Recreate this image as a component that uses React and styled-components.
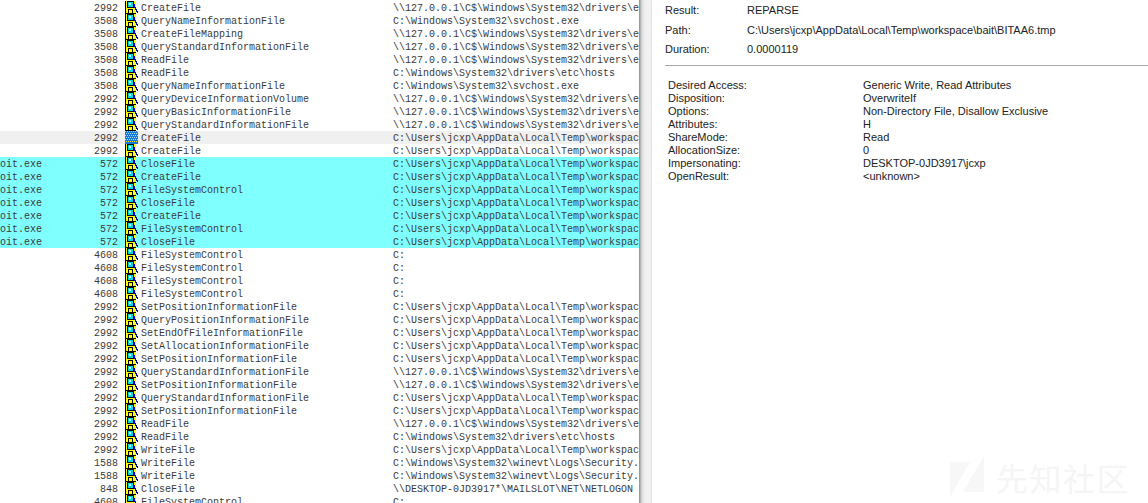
import React from 'react';
import styled, { createGlobalStyle } from 'styled-components';

const GlobalStyle = createGlobalStyle`
  html, body {
    margin: 0;
    padding: 0;
    background: #fff;
    overflow: hidden;
  }
`;

const Page = styled.div`
  position: relative;
  display: flex;
  width: 1148px;
  height: 503px;
  overflow: hidden;
  background: #fff;
`;

const EventList = styled.div`
  flex: none;
  width: 639px;
  height: 503px;
  padding-top: 1px;
  box-sizing: border-box;
  overflow: hidden;
  font-family: "Liberation Mono", monospace;
  font-size: 10px;
  color: #3a3a3a;
`;

const rowBackground = { cyan: '#80ffff', selected: '#f0f0f0' };

const Row = styled.div`
  display: flex;
  align-items: flex-start;
  height: 13px;
  line-height: 15px;
  white-space: nowrap;
  background: ${(p) => rowBackground[p.$tone] || 'transparent'};
`;

const ProcessCell = styled.span`
  flex: none;
  width: 90px;
  overflow: hidden;
`;

const PidCell = styled.span`
  flex: none;
  width: 28px;
  text-align: right;
`;

const IconCell = styled.span`
  flex: none;
  display: flex;
  width: 13px;
  height: 13px;
  margin: 0 3px 0 7px;
`;

const OperationCell = styled.span`
  flex: none;
  width: 252px;
`;

const PathCell = styled.span`
  flex: none;
  width: 246px;
  overflow: hidden;
`;

const Splitter = styled.div`
  flex: none;
  width: 13px;
  height: 503px;
  box-sizing: border-box;
  background: linear-gradient(90deg, #8c8c8c 0, #dedede 3px, #f0f0f0 6px, #f2f2f2 100%);
  border-right: 1px solid #e2e2e2;
`;

const Details = styled.div`
  flex: 1;
  display: flex;
  flex-direction: column;
  padding-left: 13px;
  font-family: "Liberation Sans", Arial, sans-serif;
  font-size: 11px;
  color: #222;
`;

const SummaryRow = styled.div`
  display: grid;
  grid-template-columns: 82px 1fr;
  height: ${(p) => p.$height}px;
  align-items: center;
`;

const Rule = styled.div`
  height: 1px;
  margin-top: 7px;
  background: #a8a8a8;
`;

const PropertyList = styled.div`
  display: grid;
  grid-template-columns: 195px 1fr;
  grid-auto-rows: 13px;
  line-height: 13px;
  align-items: center;
  margin: 13px 0 0 3px;
`;

const Watermark = styled.div`
  position: absolute;
  right: 18px;
  bottom: 5px;
  display: flex;
  align-items: center;
  gap: 10px;
  font-family: "Noto Sans CJK SC", sans-serif;
  font-size: 32px;
  line-height: 40px;
  letter-spacing: 1.5px;
  color: #f5f5f5;
`;

const FileIcon = ({ pending }) => (
  <svg width="13" height="13" viewBox="0 0 13 13" shapeRendering="crispEdges">
    <rect x="0" y="0" width="11" height="13" fill="#ffff00" />
    <rect x="2" y="0" width="7" height="7" fill="#000" />
    <rect x="3" y="1" width="5" height="5" fill="#00d8e8" />
    <rect x="4" y="2" width="2" height="2" fill="#c8ffff" />
    <rect x="0" y="0" width="1" height="13" fill="#000" />
    <rect x="0" y="12" width="11" height="1" fill="#000" />
    <rect x="3" y="8" width="5" height="1" fill="#000" />
    <rect x="3" y="9" width="1" height="3" fill="#000" />
    <rect x="7" y="9" width="1" height="3" fill="#000" />
    <path d="M9 3h1v3h1v2h1v2h1v2h-1v-1h-1v-2h-1v-2h-1z" fill="#0000c0" />
    {pending && (
      <g>
        <rect x="0" y="0" width="13" height="13" fill="#1878d8" />
        {Array.from({ length: 42 }, (_, i) => (
          <rect
            key={i}
            x={(i % 7) * 2 + (Math.floor(i / 7) % 2)}
            y={Math.floor(i / 7) * 2}
            width="1"
            height="1"
            fill={i > 27 ? '#ffe800' : '#a8e0f0'}
          />
        ))}
      </g>
    )}
  </svg>
);

const PIPE = '\\\\127.0.0.1\\C$\\Windows\\System32\\drivers\\etc\\hosts';
const SVCHOST = 'C:\\Windows\\System32\\svchost.exe';
const HOSTS = 'C:\\Windows\\System32\\drivers\\etc\\hosts';
const TEMP = 'C:\\Users\\jcxp\\AppData\\Local\\Temp\\workspace\\bait\\BITAA6.tmp';
const SECURITY = 'C:\\Windows\\System32\\winevt\\Logs\\Security.evtx';
const MAILSLOT = '\\\\DESKTOP-0JD3917*\\MAILSLOT\\NET\\NETLOGON';

const rows = [
  ['', 2992, 'CreateFile', PIPE],
  ['', 3508, 'QueryNameInformationFile', SVCHOST],
  ['', 3508, 'CreateFileMapping', PIPE],
  ['', 3508, 'QueryStandardInformationFile', PIPE],
  ['', 3508, 'ReadFile', PIPE],
  ['', 3508, 'ReadFile', HOSTS],
  ['', 3508, 'QueryNameInformationFile', SVCHOST],
  ['', 2992, 'QueryDeviceInformationVolume', PIPE],
  ['', 2992, 'QueryBasicInformationFile', PIPE],
  ['', 2992, 'QueryStandardInformationFile', PIPE],
  ['', 2992, 'CreateFile', TEMP, 'selected'],
  ['', 2992, 'CreateFile', TEMP],
  ['oit.exe', 572, 'CloseFile', TEMP, 'cyan'],
  ['oit.exe', 572, 'CreateFile', TEMP, 'cyan'],
  ['oit.exe', 572, 'FileSystemControl', TEMP, 'cyan'],
  ['oit.exe', 572, 'CloseFile', TEMP, 'cyan'],
  ['oit.exe', 572, 'CreateFile', TEMP, 'cyan'],
  ['oit.exe', 572, 'FileSystemControl', TEMP, 'cyan'],
  ['oit.exe', 572, 'CloseFile', TEMP, 'cyan'],
  ['', 4608, 'FileSystemControl', 'C:'],
  ['', 4608, 'FileSystemControl', 'C:'],
  ['', 4608, 'FileSystemControl', 'C:'],
  ['', 4608, 'FileSystemControl', 'C:'],
  ['', 2992, 'SetPositionInformationFile', TEMP],
  ['', 2992, 'QueryPositionInformationFile', TEMP],
  ['', 2992, 'SetEndOfFileInformationFile', TEMP],
  ['', 2992, 'SetAllocationInformationFile', TEMP],
  ['', 2992, 'SetPositionInformationFile', TEMP],
  ['', 2992, 'QueryStandardInformationFile', PIPE],
  ['', 2992, 'SetPositionInformationFile', PIPE],
  ['', 2992, 'QueryStandardInformationFile', TEMP],
  ['', 2992, 'SetPositionInformationFile', TEMP],
  ['', 2992, 'ReadFile', PIPE],
  ['', 2992, 'ReadFile', HOSTS],
  ['', 2992, 'WriteFile', TEMP],
  ['', 1588, 'WriteFile', SECURITY],
  ['', 1588, 'WriteFile', SECURITY],
  ['', 848, 'CloseFile', MAILSLOT],
  ['', 4608, 'FileSystemControl', 'C:'],
];

const properties = [
  ['Desired Access:', 'Generic Write, Read Attributes'],
  ['Disposition:', 'OverwriteIf'],
  ['Options:', 'Non-Directory File, Disallow Exclusive'],
  ['Attributes:', 'H'],
  ['ShareMode:', 'Read'],
  ['AllocationSize:', '0'],
  ['Impersonating:', 'DESKTOP-0JD3917\\jcxp'],
  ['OpenResult:', '<unknown>'],
];

const App = () => (
  <Page>
    <GlobalStyle />
    <EventList>
      {rows.map(([process, pid, operation, path, tone], i) => (
        <Row key={i} $tone={tone}>
          <ProcessCell>{process}</ProcessCell>
          <PidCell>{pid}</PidCell>
          <IconCell><FileIcon pending={tone === 'selected'} /></IconCell>
          <OperationCell>{operation}</OperationCell>
          <PathCell>{path}</PathCell>
        </Row>
      ))}
    </EventList>
    <Splitter />
    <Details>
      <SummaryRow $height={20}><span>Result:</span><span>REPARSE</span></SummaryRow>
      <SummaryRow $height={20}><span>Path:</span><span>C:\Users\jcxp\AppData\Local\Temp\workspace\bait\BITAA6.tmp</span></SummaryRow>
      <SummaryRow $height={18}><span>Duration:</span><span>0.0000119</span></SummaryRow>
      <Rule />
      <PropertyList>
        {properties.map(([name, value]) => (
          <React.Fragment key={name}>
            <span>{name}</span>
            <span>{value}</span>
          </React.Fragment>
        ))}
      </PropertyList>
    </Details>
    <Watermark>
      <svg width="36" height="42" viewBox="0 0 36 42">
        <path d="M0 6H20L0 41Z" fill="#f7f7f7" />
        <path d="M34 0V36H13Z" fill="#f7f7f7" />
      </svg>
      先知社区
    </Watermark>
  </Page>
);

export default App;
